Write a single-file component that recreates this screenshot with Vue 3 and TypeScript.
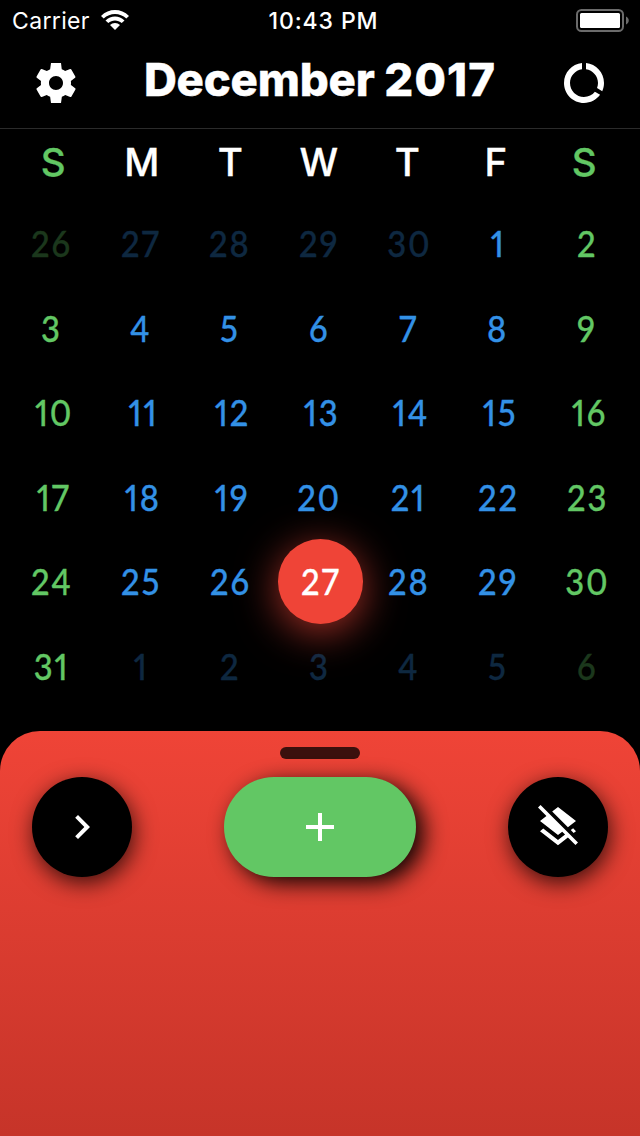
<script setup lang="ts">
interface Day {
  n: number
  weekend: boolean
  outside: boolean
  selected: boolean
}

const weekdays: string[] = ['S', 'M', 'T', 'W', 'T', 'F', 'S']

// The grid opens on November 26 and closes on January 6.
const days: Day[] = Array.from({ length: 42 }, (_, i) => {
  const offset = i - 4
  const n = offset < 1 ? 30 + offset : offset > 31 ? offset - 31 : offset
  return {
    n,
    weekend: i % 7 === 0 || i % 7 === 6,
    outside: offset < 1 || offset > 31,
    selected: offset === 27,
  }
})
</script>

<template>
  <div class="screen">
    <div class="status">
      <div class="carrier">
        <span>Carrier</span>
        <svg class="wifi" viewBox="0 0 28 20">
          <path d="M0 5.9C7.8-1.9 20.2-1.9 28 5.9L25.3 8.6C19 2.4 9 2.4 2.7 8.6Z" />
          <path d="M4.5 10.4C9.8 5.2 18.2 5.2 23.5 10.4L20.7 13.1C17 9.5 11 9.5 7.3 13.1Z" />
          <path d="M9 15C11.8 12.3 16.2 12.3 19 15L14 20Z" />
        </svg>
      </div>
      <div class="time">10:43 PM</div>
      <svg class="battery" viewBox="0 0 54 24">
        <rect x="1" y="1" width="46" height="21" rx="4.5" fill="none" stroke="#6b6b6b" stroke-width="2" />
        <rect x="4" y="4" width="40" height="15" rx="1.5" fill="#fff" />
        <path d="M50 7.6C53.7 9 53.7 14.2 50 15.4Z" fill="#6b6b6b" />
      </svg>
    </div>

    <header class="header">
      <svg class="icon" viewBox="0 0 24 24">
        <path d="M19.43 12.98c.04-.32.07-.64.07-.98s-.03-.66-.07-.98l2.11-1.65c.19-.15.24-.42.12-.64l-2-3.46c-.12-.22-.39-.3-.61-.22l-2.49 1c-.52-.4-1.08-.73-1.69-.98L14.5 2h-5l-.43 3.07c-.61.25-1.17.59-1.69.98l-2.49-1c-.23-.09-.49 0-.61.22l-2 3.46c-.13.22-.07.49.12.64l2.11 1.65c-.04.32-.07.65-.07.98s.03.66.07.98l-2.11 1.65c-.19.15-.24.42-.12.64l2 3.46c.12.22.39.3.61.22l2.49-1c.52.4 1.08.73 1.69.98L9.5 22h5l.43-3.07c.61-.25 1.17-.59 1.69-.98l2.49 1c.23.09.49 0 .61-.22l2-3.46c.12-.22.07-.49-.12-.64l-2.11-1.65zM12 15.5c-1.93 0-3.5-1.57-3.5-3.5s1.57-3.5 3.5-3.5 3.5 1.57 3.5 3.5-1.57 3.5-3.5 3.5z" />
      </svg>
      <h1 class="title">December <span class="year">2017</span></h1>
      <svg class="icon" viewBox="0 0 24 24">
        <path d="M13 2.05v3.03c3.39.49 6 3.39 6 6.92 0 .9-.18 1.75-.48 2.54l2.6 1.53c.56-1.24.88-2.62.88-4.07 0-5.18-3.95-9.45-9-9.95zM12 19c-3.87 0-7-3.13-7-7 0-3.53 2.61-6.43 6-6.92V2.05c-5.06.5-9 4.76-9 9.95 0 5.52 4.47 10 9.99 10 3.31 0 6.24-1.61 8.06-4.09l-2.6-1.53C16.17 17.98 14.21 19 12 19z" />
      </svg>
    </header>

    <div class="weekdays">
      <span v-for="(d, i) in weekdays" :key="i" :class="{ weekend: i === 0 || i === 6 }">{{ d }}</span>
    </div>

    <div class="days">
      <div
        v-for="(d, i) in days"
        :key="i"
        class="day"
        :class="{ weekend: d.weekend, outside: d.outside, selected: d.selected }"
      >
        <span class="num" :class="{ teen: d.n >= 10 && d.n < 20 }">{{ d.n }}</span>
      </div>
    </div>

    <section class="sheet">
      <div class="handle"></div>
      <div class="actions">
        <button class="round">
          <svg class="icon" viewBox="0 0 24 24"><path d="M10 6L8.59 7.41 13.17 12l-4.58 4.59L10 18l6-6z" /></svg>
        </button>
        <button class="round add">
          <svg class="icon" viewBox="0 0 24 24"><path d="M19 13h-6v6h-2v-6H5v-2h6V5h2v6h6v2z" /></svg>
        </button>
        <button class="round">
          <svg class="icon" viewBox="0 0 24 24"><path d="M19.81 14.99l1.19-.92-1.43-1.43-1.19.92 1.43 1.43zm-.45-4.72L21 9l-9-7-2.91 2.27 7.87 7.88 2.4-1.88zM3.27 1L2 2.27l4.22 4.22L3 9l1.63 1.27L12 16l2.1-1.63 1.43 1.43L12 18.54l-7.37-5.73L3 14.07l9 7 4.95-3.85L20.73 21 22 19.73 3.27 1z" /></svg>
        </button>
      </div>
    </section>
  </div>
</template>

<style>
body {
  background: #000;
}
</style>

<style scoped>
.screen {
  display: flex;
  flex-direction: column;
  width: 640px;
  height: 1136px;
  overflow: hidden;
  background: #000;
  color: #fff;
  font-family: Inter, 'Liberation Sans', sans-serif;
}
.status {
  display: grid;
  grid-template-columns: 1fr auto 1fr;
  align-items: center;
  height: 40px;
  padding: 0 10px 0 12px;
  font-size: 23px;
}
.carrier {
  display: flex;
  align-items: center;
  gap: 11px;
  letter-spacing: 0.35px;
}
.carrier span {
  padding-top: 2px;
}
.wifi {
  width: 28px;
  height: 20px;
  fill: #fff;
}
.time {
  padding: 2px 0 0 5px;
  font-weight: 500;
  letter-spacing: 0.9px;
}
.battery {
  justify-self: end;
  width: 54px;
  height: 24px;
  margin-top: 2px;
}
.header {
  display: flex;
  align-items: center;
  justify-content: space-between;
  box-sizing: border-box;
  height: 89px;
  padding: 0 32px 3px;
  border-bottom: 1px solid #2b2b2b;
}
.icon {
  display: block;
  width: 48px;
  height: 48px;
  fill: #fff;
}
.title {
  margin: 0 0 5px;
  font-size: 45.5px;
  font-weight: 800;
  line-height: 56px;
  letter-spacing: -0.2px;
  white-space: nowrap;
  -webkit-text-stroke: 0.4px #fff;
}
.year {
  letter-spacing: 1.1px;
}
.weekdays {
  display: grid;
  grid-template-columns: repeat(7, 1fr);
  height: 70px;
  padding: 0 11.5px 0 9px;
  font-size: 38.5px;
  font-weight: 500;
  line-height: 67px;
  text-align: center;
  -webkit-text-stroke: 0.3px;
}
.weekdays .weekend {
  color: #62c764;
}
.days {
  display: grid;
  grid-template-columns: repeat(7, 1fr);
  grid-auto-rows: 84.5px;
  height: 530px;
  margin-top: 2px;
  padding: 0 8px 0 7px;
}
.day {
  display: flex;
  align-items: center;
  justify-content: center;
  color: #3391e6;
  font-family: Lato, 'Open Sans', sans-serif;
  font-size: 36px;
  font-weight: 500;
  font-variant-numeric: proportional-nums;
  letter-spacing: 2px;
  -webkit-text-stroke: 0.3px;
}
.num {
  transform: scaleX(0.91);
}
/* The narrow leading 1 needs an optical shift to sit centred in its column. */
.num.teen {
  transform: translateX(2px) scaleX(0.91);
}
.day.weekend {
  color: #62c764;
}
.day.outside .num {
  opacity: 0.28;
}
.day.selected {
  justify-self: center;
  width: 85px;
  margin-left: 2px;
  border-radius: 50%;
  background: #ef4437;
  color: #fff;
  box-shadow: 0 8px 40px rgba(240, 68, 55, 0.7);
}
.sheet {
  display: flex;
  flex: 1;
  flex-direction: column;
  align-items: center;
  border-radius: 40px 40px 0 0;
  background: linear-gradient(#ef4437, #c63429);
}
.handle {
  width: 80px;
  height: 12px;
  margin-top: 16px;
  border-radius: 6px;
  background: #3b100d;
}
.actions {
  display: flex;
  justify-content: space-between;
  align-self: stretch;
  margin: 18px 32px 0;
}
.round {
  display: flex;
  align-items: center;
  justify-content: center;
  width: 100px;
  height: 100px;
  padding: 0;
  border: 0;
  border-radius: 50px;
  background: #000;
  box-shadow: 2px 6px 22px rgba(0, 0, 0, 0.75);
}
.add {
  width: 192px;
  background: #62c764;
  box-shadow: 8px 6px 22px rgba(0, 0, 0, 0.95);
}
</style>
